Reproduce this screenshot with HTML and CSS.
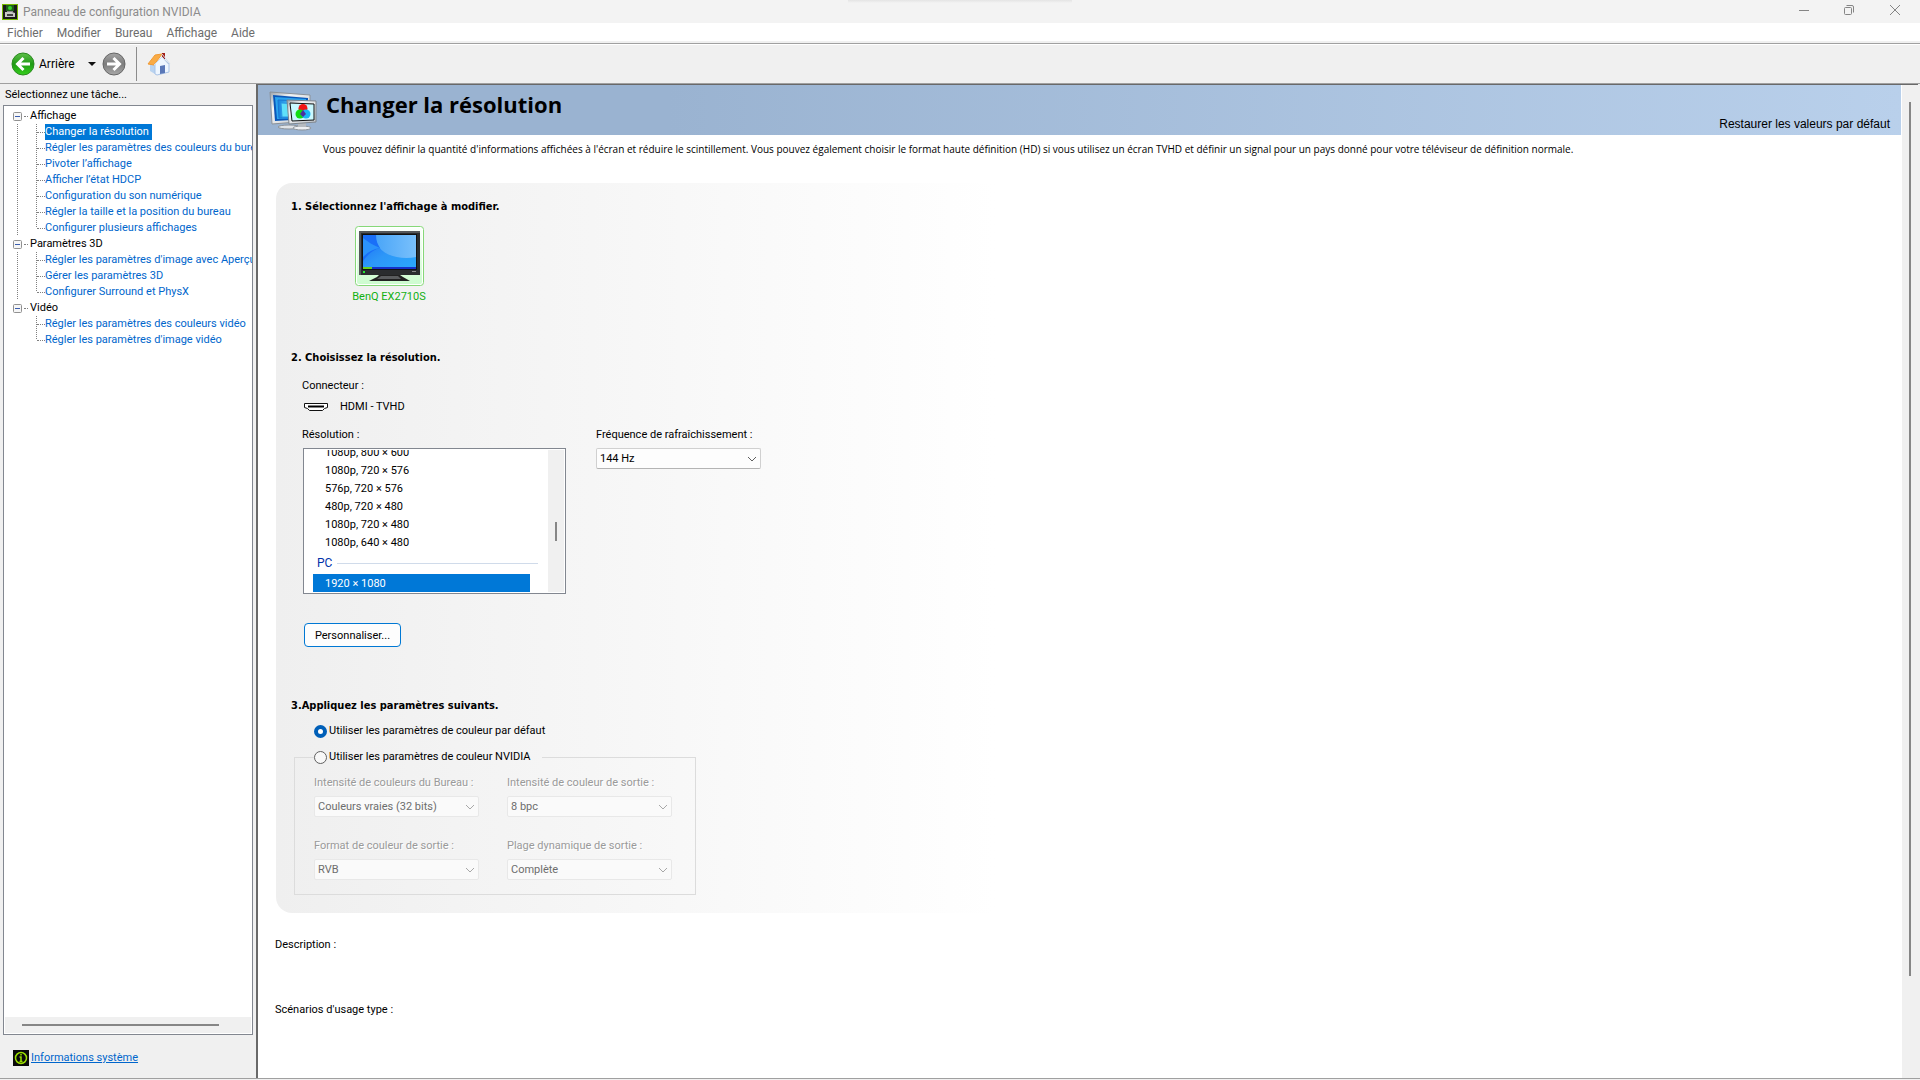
FILE: index.html
```html
<!DOCTYPE html>
<html lang="fr">
<head>
<meta charset="utf-8">
<title>Panneau de configuration NVIDIA</title>
<link rel="stylesheet" href="styles.css">
</head>
<body>
<header class="titlebar">
  <svg class="app-icon" width="16" height="16" viewBox="0 0 16 16" aria-hidden="true"><rect width="16" height="16" fill="#76b900"/><rect x="1" y="1" width="14" height="14" fill="#1b1b1b"/><rect x="4" y="1" width="8" height="6" fill="#1f5f1c"/><circle cx="8" cy="4" r="2" fill="#35d32b"/><path d="M3 8h7l3 1v4H3z" fill="#c9c9c9"/><rect x="5" y="10" width="6" height="2" fill="#444"/><path d="M5 8h6V7H5z" fill="#888"/></svg>
  <h1 class="window-title">Panneau de configuration NVIDIA</h1>
  <div class="window-buttons">
    <button type="button" aria-label="Réduire"><svg width="12" height="12" viewBox="0 0 12 12"><path d="M1 6.5h10"/></svg></button>
    <button type="button" aria-label="Niveau inférieur"><svg width="12" height="12" viewBox="0 0 12 12"><rect x="1.500" y="3.500" width="7" height="7" rx="1"/><path d="M3.500 1.500H9a1.500 1.500 0 0 1 1.500 1.500v5.500"/></svg></button>
    <button type="button" aria-label="Fermer"><svg width="12" height="12" viewBox="0 0 12 12"><path d="M1 1l10 10M11 1L1 11"/></svg></button>
  </div>
</header>

<nav class="menubar">
  <button type="button">Fichier</button>
  <button type="button">Modifier</button>
  <button type="button">Bureau</button>
  <button type="button">Affichage</button>
  <button type="button">Aide</button>
</nav>

<div class="toolbar">
  <button type="button" class="back">
    <svg width="24" height="24" viewBox="0 0 24 24" aria-hidden="true"><defs><linearGradient id="green" x1="0" y1="0" x2="0" y2="1"><stop offset="0" stop-color="#5fc04a"/><stop offset=".5" stop-color="#1f9a14"/><stop offset="1" stop-color="#35cf1c"/></linearGradient></defs><circle cx="12" cy="12" r="11" fill="url(#green)" stroke="#2b8a20"/><path d="M12.500 6L6.500 12l6 6M7 12h12" fill="none" stroke="#fff" stroke-width="3"/></svg>
    <span>Arrière</span>
  </button>
  <button type="button" class="history" aria-label="Historique"><svg width="8" height="4" viewBox="0 0 8 4"><path d="M0 0h8L4 4z" fill="#111"/></svg></button>
  <button type="button" aria-label="Suivant"><svg width="24" height="24" viewBox="0 0 24 24"><defs><linearGradient id="grey" x1="0" y1="0" x2="0" y2="1"><stop offset="0" stop-color="#a5a5a5"/><stop offset=".5" stop-color="#7d7d7d"/><stop offset="1" stop-color="#a9a9a9"/></linearGradient></defs><circle cx="12" cy="12" r="11" fill="url(#grey)" stroke="#666"/><path d="M11.500 6l6 6-6 6M17 12H5" fill="none" stroke="#fff" stroke-width="3"/></svg></button>
  <span class="separator"></span>
  <button type="button" aria-label="Accueil"><svg width="24" height="24" viewBox="0 0 24 24"><path d="M15 1h3v9h-3z" fill="#a31f17"/><path d="M3 11l5 1v10l-5-3z" fill="#b9d3f0"/><path d="M8 12l7-7 7 7v8L10 23l-2-1z" fill="#eef6ff" stroke="#a9c3e6"/><path d="M13 14l5-1v8l-5 1z" fill="#5a78b8"/><path d="M1 12L8 3l7-1-8 11z" fill="#f9ab45" stroke="#f09a35"/><path d="M15 2l8 10-1 1-7-8-8 8" fill="none" stroke="#cfdcec" stroke-width="1"/></svg></button>
</div>

<div class="workspace">
  <aside class="sidebar">
    <p class="task-label">Sélectionnez une tâche...</p>
    <nav class="tree">
      <ul class="groups">
        <li class="group"><span class="group-name"><svg width="9" height="9" viewBox="0 0 9 9" aria-hidden="true"><rect x=".5" y=".5" width="8" height="8" rx="1" fill="#f6f6f6" stroke="#919191"/><path d="M2 4.500h5" stroke="#3a5dae"/></svg><span>Affichage</span></span>
          <ul class="tasks">
            <li><a href="#resolution" class="current" aria-current="page">Changer la résolution</a></li>
            <li><a href="#couleurs">Régler les paramètres des couleurs du bureau</a></li>
            <li><a href="#pivoter">Pivoter l’affichage</a></li>
            <li><a href="#hdcp">Afficher l’état HDCP</a></li>
            <li><a href="#son">Configuration du son numérique</a></li>
            <li><a href="#taille">Régler la taille et la position du bureau</a></li>
            <li><a href="#plusieurs">Configurer plusieurs affichages</a></li>
          </ul>
        </li>
        <li class="group"><span class="group-name"><svg width="9" height="9" viewBox="0 0 9 9" aria-hidden="true"><rect x=".5" y=".5" width="8" height="8" rx="1" fill="#f6f6f6" stroke="#919191"/><path d="M2 4.500h5" stroke="#3a5dae"/></svg><span>Paramètres 3D</span></span>
          <ul class="tasks">
            <li><a href="#apercu">Régler les paramètres d'image avec Aperçu</a></li>
            <li><a href="#gerer3d">Gérer les paramètres 3D</a></li>
            <li><a href="#physx">Configurer Surround et PhysX</a></li>
          </ul>
        </li>
        <li class="group"><span class="group-name"><svg width="9" height="9" viewBox="0 0 9 9" aria-hidden="true"><rect x=".5" y=".5" width="8" height="8" rx="1" fill="#f6f6f6" stroke="#919191"/><path d="M2 4.500h5" stroke="#3a5dae"/></svg><span>Vidéo</span></span>
          <ul class="tasks">
            <li><a href="#couleursvideo">Régler les paramètres des couleurs vidéo</a></li>
            <li><a href="#imagevideo">Régler les paramètres d'image vidéo</a></li>
          </ul>
        </li>
      </ul>
      <div class="tree-scroll"><span class="tree-thumb"></span></div>
    </nav>
    <div class="system-info">
      <svg width="16" height="16" viewBox="0 0 16 16" aria-hidden="true"><rect width="16" height="16" fill="#0a0a0a"/><circle cx="8" cy="8" r="5.500" fill="none" stroke="#9be000" stroke-width="1.500"/><path d="M8 4v1.500M6.500 7H8v4M6.500 11.500h3" fill="none" stroke="#9be000" stroke-width="1.500"/></svg>
      <a href="#informations">Informations système</a>
    </div>
  </aside>

  <main class="page">
    <div class="content">
      <header class="page-header">
        <svg class="page-icon" width="48" height="40" viewBox="0 0 48 40" aria-hidden="true">
          <defs><linearGradient id="frame" x1="0" y1="0" x2="1" y2="1"><stop offset="0" stop-color="#9ba3ab"/><stop offset=".3" stop-color="#f2f4f6"/><stop offset="1" stop-color="#bfc4c9"/></linearGradient><linearGradient id="aqua" x1="0" y1="0" x2="1" y2="0"><stop offset="0" stop-color="#1783e0"/><stop offset="1" stop-color="#7ff5ff"/></linearGradient></defs>
          <ellipse cx="20" cy="36" rx="11" ry="2" fill="#dfe3e7" stroke="#8b9299"/>
          <path d="M1 1l40 3v26L3 33z" fill="url(#frame)" stroke="#8b9299"/>
          <path d="M4 4l35 3v21L6 30z" fill="#0a57b8"/><path d="M6 6l31 2v19L8 28z" fill="#2ba4ee"/><path d="M9 9l26 1v16l-25 1z" fill="url(#aqua)" stroke="#1877d4"/><path d="M12 12l20 1v13H13z" fill="#5fe0fa" stroke="#2b96e6"/>
          <ellipse cx="33" cy="37" rx="9" ry="2" fill="#eceff2" stroke="#8b9299"/><path d="M29 32h8v4h-8z" fill="#b6bbc0"/>
          <path d="M18 9l29 1v21l-27 2z" fill="url(#frame)" stroke="#7e858c"/><path d="M21 12l24 1v16l-22 1z" fill="#c9f8ff" stroke="#111"/>
          <circle cx="34" cy="17.500" r="4.500" fill="#f01515"/><circle cx="31" cy="23" r="4.500" fill="#12dd12"/><circle cx="37" cy="23" r="4.500" fill="#19b6f5"/><path d="M34 19l3 4-3 3-3-3z" fill="#4b2fa0"/>
        </svg>
        <h2 class="page-title">Changer la résolution</h2>
        <button type="button" class="restore">Restaurer les valeurs par défaut</button>
      </header>
      <p class="intro">Vous pouvez définir la quantité d'informations affichées à l'écran et réduire le scintillement. Vous pouvez également choisir le format haute définition (HD) si vous utilisez un écran TVHD et définir un signal pour un pays donné pour votre téléviseur de définition normale.</p>

      <form class="panel">
        <h3>1. Sélectionnez l'affichage à modifier.</h3>
        <button type="button" class="display" aria-pressed="true">
          <svg class="display-icon" width="69" height="60" viewBox="0 0 69 60" aria-hidden="true">
            <defs><linearGradient id="glow" x1="0" y1="0" x2="0" y2="1"><stop offset="0" stop-color="#fbfffb"/><stop offset="1" stop-color="#cdfccf"/></linearGradient><linearGradient id="screen" x1="0" y1="0" x2="1" y2="1"><stop offset="0" stop-color="#1a6cf5"/><stop offset=".5" stop-color="#2d97f8"/><stop offset="1" stop-color="#2aa8fb"/></linearGradient><linearGradient id="shine" x1="0" y1="0" x2="1" y2="0"><stop offset="0" stop-color="#49a5f8"/><stop offset="1" stop-color="#79c0fb"/></linearGradient></defs>
            <rect x=".5" y=".5" width="68" height="59" rx="3" fill="#fff" stroke="#86d878"/><rect x="2" y="2" width="65" height="56" rx="2" fill="url(#glow)"/>
            <rect x="4" y="5" width="61" height="44" fill="#2a2c2e"/><path d="M4 5h61v2H6v42H4z" fill="#55585b"/>
            <rect x="7" y="8" width="55" height="36" fill="#111"/><rect x="8" y="9" width="53" height="34" fill="url(#screen)"/>
            <path d="M20 9h41v22c-12 3-30 0-37-10-3-4-3-8-4-12z" fill="url(#shine)"/><path d="M8 9h13c0 6 2 10 4 13-6 1-12 6-17 13z" fill="#1a6ff8"/><path d="M8 12c5 4 10 7 17 10-7 1-12 4-17 9z" fill="#2b93fb"/>
            <rect x="8" y="41" width="53" height="2" fill="#1531c9"/><rect x="8" y="41" width="9" height="2" fill="#6ad01e"/>
            <rect x="8" y="45" width="2" height="2" fill="#24e834"/><rect x="57" y="45" width="4" height="1" fill="#888"/>
            <path d="M24 49h21l3 2 7 4H14l8-4z" fill="#222"/><path d="M26 50h17l3 3H22z" fill="#5a5c5e"/>
          </svg>
          <span>BenQ EX2710S</span>
        </button>

        <h3 class="step-two">2. Choisissez la résolution.</h3>
        <div class="connector">
          <p>Connecteur :</p>
          <p class="port"><svg width="24" height="8" viewBox="0 0 24 8" aria-hidden="true"><path d="M.5.500h23v4l-3 1-2 2h-13l-2-2-3-1z" fill="#fff" stroke="#111"/><path d="M4 3.500h16" stroke="#000" stroke-width="2"/></svg>HDMI - TVHD</p>
        </div>
        <div class="mode">
          <div class="mode-column">
            <span id="reslabel">Résolution :</span>
            <div class="listbox">
              <ul role="listbox" aria-labelledby="reslabel" tabindex="0">
                <li role="option">1080p, 800 × 600</li>
                <li role="option">1080p, 720 × 576</li>
                <li role="option">576p, 720 × 576</li>
                <li role="option">480p, 720 × 480</li>
                <li role="option">1080p, 720 × 480</li>
                <li role="option">1080p, 640 × 480</li>
                <li class="list-group" role="presentation">PC</li>
                <li role="option" class="selected" aria-selected="true">1920 × 1080</li>
              </ul>
              <div class="list-scroll"><span class="list-thumb"></span></div>
            </div>
          </div>
          <div class="mode-column">
            <label for="freq">Fréquence de rafraîchissement :</label>
            <span class="combo"><select id="freq"><option>144 Hz</option></select><svg width="10" height="6" viewBox="0 0 10 6" aria-hidden="true"><path d="M1 1l4 4 4-4"/></svg></span>
          </div>
        </div>
        <button type="button" class="customize">Personnaliser...</button>

        <h3 class="step-three">3.Appliquez les paramètres suivants.</h3>
        <label class="choice default-choice"><input type="radio" name="couleur" checked>Utiliser les paramètres de couleur par défaut</label>
        <fieldset class="colors">
          <legend><label class="choice"><input type="radio" name="couleur">Utiliser les paramètres de couleur NVIDIA</label></legend>
          <div class="field"><label for="bureau">Intensité de couleurs du Bureau :</label>
            <span class="combo"><select id="bureau" disabled><option>Couleurs vraies (32 bits)</option></select><svg width="10" height="6" viewBox="0 0 10 6" aria-hidden="true"><path d="M1 1l4 4 4-4"/></svg></span></div>
          <div class="field"><label for="sortie">Intensité de couleur de sortie :</label>
            <span class="combo"><select id="sortie" disabled><option>8 bpc</option></select><svg width="10" height="6" viewBox="0 0 10 6" aria-hidden="true"><path d="M1 1l4 4 4-4"/></svg></span></div>
          <div class="field"><label for="format">Format de couleur de sortie :</label>
            <span class="combo"><select id="format" disabled><option>RVB</option></select><svg width="10" height="6" viewBox="0 0 10 6" aria-hidden="true"><path d="M1 1l4 4 4-4"/></svg></span></div>
          <div class="field"><label for="plage">Plage dynamique de sortie :</label>
            <span class="combo"><select id="plage" disabled><option>Complète</option></select><svg width="10" height="6" viewBox="0 0 10 6" aria-hidden="true"><path d="M1 1l4 4 4-4"/></svg></span></div>
        </fieldset>
      </form>
      <p class="note">Description :</p>
      <p class="note scenarios">Scénarios d'usage type :</p>
    </div>
    <div class="page-scroll"><span class="page-thumb"></span></div>
  </main>
</div>
</body>
</html>
```
FILE: styles.css
```css
* { box-sizing: border-box; margin: 0; padding: 0; }

body {
  display: flex;
  flex-direction: column;
  min-height: 100vh;
  background: #f0f0f0;
  color: #000;
  font: 11px/16px Roboto, "Liberation Sans", sans-serif;
}

button { border: 0; background: none; color: inherit; font: inherit; }
ul { list-style: none; }
svg { display: block; flex: none; }

/* Window frame */
.titlebar {
  position: relative;
  display: flex;
  align-items: center;
  height: 23px;
  padding-left: 2px;
  background: #f3f3f3;
}
.titlebar::after {
  content: "";
  position: absolute;
  top: 0;
  left: 50%;
  width: 224px;
  height: 3px;
  margin-left: -112px;
  background: linear-gradient(#e4e4e4, #f3f3f3);
}
.window-title { margin-left: 5px; color: #8c8c8c; font-size: 12px; font-weight: 400; }
.window-buttons { display: flex; margin: 0 1px 3px auto; }
.window-buttons button { display: grid; place-items: center; width: 45px; height: 20px; }
.window-buttons button:last-child { width: 48px; }
.window-buttons svg { fill: none; stroke: #858585; }

.menubar {
  display: flex;
  gap: 14px;
  height: 20px;
  padding-left: 7px;
  border-bottom: 2px solid #f0f0f0;
  background: #fff;
  color: #6d6d6d;
  font-size: 12px;
}
.menubar button { line-height: 20px; }

.toolbar {
  display: flex;
  align-items: center;
  height: 41px;
  padding-left: 11px;
  border-top: 1px solid #a0a0a0;
  border-bottom: 1px solid #a0a0a0;
  box-shadow: inset 0 1px #fff;
  font-size: 12px;
}
.back { display: flex; align-items: center; gap: 4px; }
.history { margin: 0 6px 0 13px; }
.separator { width: 1px; height: 34px; margin: 0 10px; background: #8c8c8c; }

/* Task tree */
.workspace { display: flex; flex: 1; border-bottom: 1px solid #a0a0a0; margin-bottom: 1px; }
.sidebar { display: flex; flex-direction: column; flex: none; width: 256px; padding: 3px 3px 12px; }
.task-label { padding-left: 2px; }
.tree {
  display: flex;
  flex-direction: column;
  flex: 1;
  margin-top: 2px;
  padding: 2px 1px 1px;
  border: 1px solid #828790;
  background: #fff;
  overflow: hidden;
  white-space: nowrap;
}
.groups { flex: 1; }
.group-name { display: flex; align-items: center; padding-left: 8px; }
.group-name svg { margin-right: 2px; }
.group-name svg + span { display: flex; align-items: center; gap: 2px; }
.group-name svg + span::before { content: ""; width: 4px; border-top: 1px dotted #808080; }
.tasks {
  background:
    repeating-linear-gradient(#808080 0 1px, transparent 1px 2px) 12px 0 / 1px 100% no-repeat,
    repeating-linear-gradient(#808080 0 1px, transparent 1px 2px) 31px 0 / 1px calc(100% - 8px) no-repeat;
}
.group:last-child .tasks {
  background: repeating-linear-gradient(#808080 0 1px, transparent 1px 2px) 31px 0 / 1px calc(100% - 8px) no-repeat;
}
.tasks li { display: flex; align-items: center; padding-left: 32px; }
.tasks li::before { content: ""; flex: none; width: 8px; border-top: 1px dotted #808080; }
.tasks a { color: #0066cc; text-decoration: none; }
.tasks .current { padding-right: 3px; background: #0078d7; color: #fff; }
.tree-scroll { display: flex; align-items: center; height: 16px; padding: 0 32px 0 17px; background: #f0f0f0; }
.tree-thumb { flex: 1; height: 2px; background: #868686; }
.system-info { display: flex; align-items: center; gap: 2px; margin-top: 15px; padding-left: 10px; }
.system-info a { color: #0066cc; }

/* Page */
.page {
  display: flex;
  flex: 1;
  min-width: 0;
  margin-right: 2px;
  border-top: 1px solid #696969;
  border-left: 2px solid #696969;
  background: #fff;
}
.content { flex: 1; min-width: 0; margin-right: 1px; }
.page-scroll { width: 16px; flex: none; display: flex; justify-content: center; padding: 17px 0 102px; background: #f0f0f0; }
.page-thumb { width: 2px; background: #868686; }

.page-header {
  display: flex;
  align-items: flex-start;
  height: 50px;
  padding: 6px 11px 0;
  background: linear-gradient(90deg, #9ab3d1 25%, #b9d0eb);
}
.page-title { margin-left: 9px; font: bold 22px/26px "Open Sans", "Noto Sans", sans-serif; }
.restore { align-self: flex-end; margin: 0 0 3px auto; font: 12px/16px "Liberation Sans", sans-serif; }
.intro { padding: 6px 16px 0 65px; font: 10px/16px "Open Sans", "Noto Sans", sans-serif; }

.panel {
  margin: 26px 0 0 18px;
  padding: 16px 15px 18px;
  border-radius: 16px 0 0 16px;
  background: linear-gradient(90deg, #efefef, #fff 720px);
}
.panel h3 { font: bold 11px/16px "DejaVu Sans Condensed", "DejaVu Sans", sans-serif; }
.display {
  display: flex;
  flex-direction: column;
  align-items: center;
  gap: 3px;
  width: 72px;
  margin: 11px 0 0 62px;
  color: #12b012;
  white-space: nowrap;
}
.panel .step-two { margin-top: 45px; }
.connector { display: flex; flex-direction: column; gap: 5px; margin: 12px 0 0 11px; }
.port { display: flex; align-items: center; gap: 12px; padding-left: 2px; }

.mode { display: flex; gap: 30px; margin: 12px 0 0 11px; }
.mode-column { display: flex; flex-direction: column; gap: 5px; }
.listbox {
  display: flex;
  width: 263px;
  height: 146px;
  margin-left: 1px;
  padding: 1px;
  border: 1px solid #828790;
  background: #fff;
}
.listbox ul { display: flex; flex: 1; flex-direction: column; justify-content: flex-end; padding: 0 18px 0 8px; overflow: hidden; }
.listbox li { flex: none; height: 18px; padding-left: 12px; line-height: 20px; }
.listbox li:nth-last-child(n+3) { line-height: 22px; }
.listbox .list-group {
  display: flex;
  align-items: center;
  gap: 5px;
  height: 22px;
  margin: 2px -8px 0 0;
  padding-left: 4px;
  color: #0033aa;
  font-size: 12px;
}
.list-group::after { content: ""; flex: 1; height: 1px; background: #d0dbea; }
.listbox .selected { background: #0078d7; color: #fff; }
.list-scroll { display: flex; justify-content: center; width: 16px; padding: 72px 0 51px; background: #f0f0f0; }
.list-thumb { width: 2px; background: #868686; }

.combo { display: grid; align-items: center; width: 165px; }
.combo select, .combo svg { grid-area: 1 / 1; }
.combo select {
  appearance: none;
  width: 100%;
  height: 21px;
  padding: 1px 20px 0 3px;
  border: 1px solid #d0d0d0;
  border-bottom-color: #b4b4b4;
  border-radius: 2px;
  background: #fdfdfd;
  color: #000;
  font: inherit;
}
.combo svg { justify-self: end; margin-right: 4px; fill: none; stroke: #606060; pointer-events: none; }
.combo select:disabled { border-color: #e8e8e8; background: #fafafa; color: #6d6d6d; opacity: 1; }
.combo select:disabled + svg { stroke: #a8a8a8; }

.customize {
  display: block;
  width: 97px;
  height: 24px;
  margin: 29px 0 0 13px;
  padding-top: 1px;
  border: 1px solid #0078d4;
  border-radius: 4px;
  background: #fdfdfd;
}
.panel .step-three { margin-top: 51px; }
.choice { display: flex; align-items: center; gap: 2px; }
.choice input {
  appearance: none;
  width: 13px;
  height: 13px;
  border: 1px solid #606060;
  border-radius: 50%;
  background: #f8f8f8;
}
.choice input:checked { border: 4px solid #005fb8; background: #fff; }
.default-choice { margin: 9px 0 10px 23px; }

.colors {
  display: grid;
  grid-template-columns: 165px 165px;
  gap: 21px 28px;
  width: 402px;
  margin-left: 3px;
  padding: 10px 0 14px 19px;
  border: 1px solid #dcdcdc;
}
.colors legend { width: 228px; }
.field { display: flex; flex-direction: column; gap: 5px; }
.field label { color: #9a9a9a; text-shadow: 1px 1px #fff; }
.note { padding: 24px 0 0 17px; }
.scenarios { padding-top: 49px; }
```
